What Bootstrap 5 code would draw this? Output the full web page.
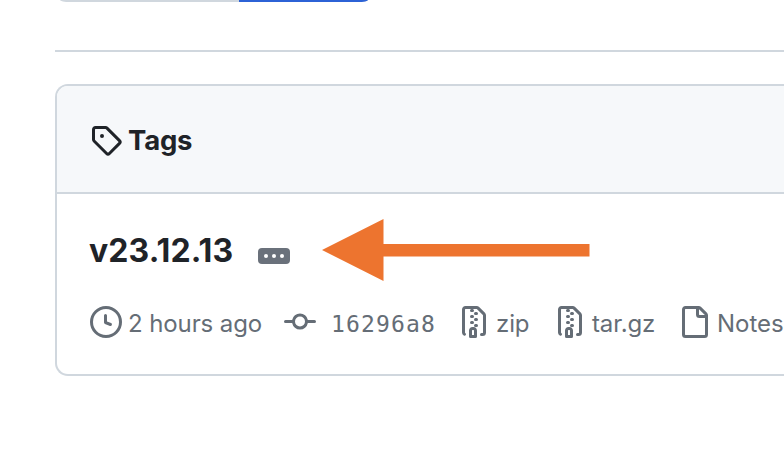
<!DOCTYPE html>
<html lang="en">
<head>
<meta charset="utf-8">
<meta name="viewport" content="width=device-width, initial-scale=1">
<title>Tags</title>
<link href="https://cdn.jsdelivr.net/npm/bootstrap@5.3.0/dist/css/bootstrap.min.css" rel="stylesheet">
<style>
body{font-family:Inter,"Liberation Sans",sans-serif;color:#1f2328;background:#fff;height:468px;overflow:hidden}
.page{padding-left:55px;height:468px}
.switcher{height:2px;width:308px;border-radius:0 0 10px 10px/0 0 2px 2px;background:#d0d7de;margin-left:5px}
.switcher-on{width:129px;background:#2c62d6}
.rule{height:2px;background:#d0d7de;margin-top:48px}
.tagbox{margin-top:32px;height:292px;border:2px solid #d0d7de;border-right:0;border-radius:13px 0 0 13px}
.tagbox-head{height:108px;padding:2px 0 0 33px;background:#f6f8fa;border-bottom:2px solid #d0d7de;border-radius:11px 0 0 0;gap:6px}
.tagbox-head h2{font-size:27.5px;font-weight:700;line-height:36px;letter-spacing:-.2px}
.tagbox-body{padding:25px 0 0 33px}
.release{height:62px}
.release h3{font-size:32px;font-weight:700;line-height:40px;width:169px;margin-left:-1px;padding-top:2px;letter-spacing:.1px}
.more{width:32px;height:16px;border-radius:4px;background:#6a717b;gap:4px;margin-top:12px}
.more i{width:4px;height:4px;border-radius:50%;background:#fff}
.arrow{margin-left:32px}
.meta{display:grid;grid-template-columns:194px 174px 96px 124px 130px;margin-top:25px;color:#656d76;font-size:24px;line-height:32px}
.meta>span{display:flex;white-space:nowrap}
.meta svg{flex:none;margin-right:6px}
.meta b{font-weight:400;padding-top:2px;letter-spacing:-.1px}
.meta .sha{font-family:"DejaVu Sans Mono","Liberation Mono",monospace;font-size:23px;letter-spacing:1.15px;margin-left:9px}
.meta .notes{margin-left:1px;letter-spacing:0}
</style>
<script src="https://cdn.jsdelivr.net/npm/bootstrap@5.3.0/dist/js/bootstrap.bundle.min.js"></script>
</head>
<body>
<svg class="d-none">
<symbol id="zip" viewBox="0 0 16 16"><path d="M3.5 1.75v11.5c0 .09.048.173.126.217a.75.75 0 0 1-.752 1.298A1.748 1.748 0 0 1 2 13.25V1.75C2 .784 2.784 0 3.75 0h5.586c.464 0 .909.185 1.237.513l2.914 2.914c.329.328.513.773.513 1.237v8.586A1.75 1.75 0 0 1 12.25 15h-.5a.75.75 0 0 1 0-1.5h.5a.25.25 0 0 0 .25-.25V4.664a.25.25 0 0 0-.073-.177L9.513 1.573a.25.25 0 0 0-.177-.073H7.25a.75.75 0 0 1 0 1.5h-.5a.75.75 0 0 1 0-1.5h-3a.25.25 0 0 0-.25.25Zm3.75 8.75h.5c.966 0 1.75.784 1.75 1.75v3a.75.75 0 0 1-.75.75h-2.5a.75.75 0 0 1-.75-.75v-3c0-.966.784-1.75 1.75-1.75ZM6 5.25a.75.75 0 0 1 .75-.75h.5a.75.75 0 0 1 0 1.5h-.5A.75.75 0 0 1 6 5.25Zm.75 2.25h.5a.75.75 0 0 1 0 1.5h-.5a.75.75 0 0 1 0-1.5ZM8 6.75A.75.75 0 0 1 8.75 6h.5a.75.75 0 0 1 0 1.5h-.5A.75.75 0 0 1 8 6.75ZM8.75 3h.5a.75.75 0 0 1 0 1.5h-.5a.75.75 0 0 1 0-1.5ZM8 9.75A.75.75 0 0 1 8.75 9h.5a.75.75 0 0 1 0 1.5h-.5A.75.75 0 0 1 8 9.75Zm-1 2.5v2.25h1v-2.25a.25.25 0 0 0-.25-.25h-.5a.25.25 0 0 0-.25.25Z"/></symbol>
</svg>
<main class="page">
  <div class="switcher d-flex justify-content-end overflow-hidden"><div class="switcher-on"></div></div>
  <div class="rule"></div>
  <section class="tagbox">
    <header class="tagbox-head d-flex align-items-center">
      <svg width="32" height="32" viewBox="0 0 16 16" fill="currentColor"><path d="M1 7.775V2.75C1 1.784 1.784 1 2.75 1h5.025c.464 0 .91.184 1.238.513l6.25 6.25a1.75 1.75 0 0 1 0 2.474l-5.026 5.026a1.75 1.75 0 0 1-2.474 0l-6.25-6.25A1.752 1.752 0 0 1 1 7.775Zm1.5 0c0 .066.026.13.073.177l6.25 6.25a.25.25 0 0 0 .354 0l5.025-5.025a.25.25 0 0 0 0-.354l-6.25-6.25a.25.25 0 0 0-.177-.073H2.75a.25.25 0 0 0-.25.25ZM6 5a1 1 0 1 1 0 2 1 1 0 0 1 0-2Z"/></svg>
      <h2 class="mb-0">Tags</h2>
    </header>
    <div class="tagbox-body">
      <div class="release d-flex align-items-center">
        <h3 class="mb-0">v23.12.13</h3>
        <span class="more d-flex align-items-center justify-content-center"><i></i><i></i><i></i></span>
        <svg class="arrow" width="268" height="62" viewBox="0 0 268 62"><path d="M0 31 61.5 0v25H267.500v12.500H61.500V62Z" fill="#ed742f"/></svg>
      </div>
      <div class="meta">
        <span><svg width="32" height="32" viewBox="0 0 16 16" fill="currentColor"><path d="M8 0a8 8 0 1 1 0 16A8 8 0 0 1 8 0ZM1.5 8a6.5 6.5 0 1 0 13 0 6.500 6.500 0 0 0-13 0Zm7-3.250v2.992l2.028.812a.75.75 0 0 1-.557 1.392l-2.500-1A.751.751 0 0 1 7 8.250v-3.500a.75.75 0 0 1 1.500 0Z"/></svg><b>2 hours ago</b></span>
        <span><svg width="32" height="32" viewBox="0 0 16 16" fill="currentColor"><path d="M11.930 8.500a4.002 4.002 0 0 1-7.860 0H.75a.75.75 0 0 1 0-1.500h3.320a4.002 4.002 0 0 1 7.860 0h3.320a.75.75 0 0 1 0 1.500Zm-1.430-.75a2.500 2.500 0 1 0-5 0 2.500 2.500 0 0 0 5 0Z"/></svg><b class="sha">16296a8</b></span>
        <span><svg width="32" height="32" fill="currentColor"><use href="#zip"/></svg><b>zip</b></span>
        <span><svg width="32" height="32" fill="currentColor"><use href="#zip"/></svg><b>tar.gz</b></span>
        <span><svg width="32" height="32" viewBox="0 0 16 16" fill="currentColor"><path d="M2 1.750C2 .784 2.784 0 3.750 0h6.586c.464 0 .909.184 1.237.513l2.914 2.914c.329.328.513.773.513 1.237v9.586A1.750 1.750 0 0 1 13.250 16h-9.500A1.750 1.750 0 0 1 2 14.250Zm1.750-.25a.25.25 0 0 0-.25.25v12.500c0 .138.112.25.25.25h9.500a.25.25 0 0 0 .25-.25V6h-2.750A1.750 1.750 0 0 1 9 4.250V1.500Zm6.750.062V4.250c0 .138.112.25.25.25h2.688l-.011-.013-2.914-2.914-.013-.011Z"/></svg><b class="notes">Notes</b></span>
      </div>
    </div>
  </section>
</main>
</body>
</html>
